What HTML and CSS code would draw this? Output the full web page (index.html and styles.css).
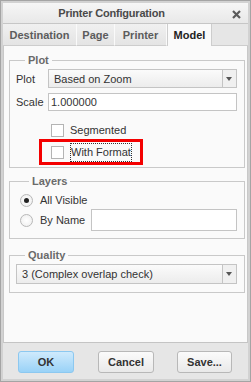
FILE: index.html
```html
<!DOCTYPE html>
<html lang="en">
<head>
    <meta charset="UTF-8">
    <title>Printer Configuration</title>
    <link rel="stylesheet" href="styles.css">
</head>
<body>
    <div class="window">
        <div class="titlebar">
            <span class="title">Printer Configuration</span>
            <svg class="close" width="9" height="9" viewBox="0 0 9 9">
                <path d="M1 1 L8 8 M8 1 L1 8" stroke="#5a5a5a" stroke-width="2.2"/>
            </svg>
        </div>

        <div class="tabs">
            <div class="tab t-dest">Destination</div>
            <div class="tab t-page">Page</div>
            <div class="tab t-printer">Printer</div>
            <div class="tab t-model active">Model</div>
            <div class="tab-fill"></div>
        </div>

        <div class="panel">
            <fieldset class="group plot">
                <legend>Plot</legend>
                <div class="row">
                    <span class="label">Plot</span>
                    <div class="select">
                        <span class="value">Based on Zoom</span>
                        <span class="arrow"></span>
                    </div>
                </div>
                <div class="row">
                    <span class="label">Scale</span>
                    <div class="input scale">1.000000</div>
                </div>
                <div class="check">
                    <span class="box"></span>
                    <span>Segmented</span>
                </div>
                <div class="check marked">
                    <span class="box"></span>
                    <span class="focus">With Format</span>
                </div>
            </fieldset>

            <fieldset class="group layers">
                <legend>Layers</legend>
                <div class="radio-row">
                    <span class="radio checked"></span>
                    <span>All Visible</span>
                </div>
                <div class="radio-row">
                    <span class="radio"></span>
                    <span class="radio-label">By Name</span>
                    <div class="input name"></div>
                </div>
            </fieldset>

            <fieldset class="group quality">
                <legend>Quality</legend>
                <div class="select wide">
                    <span class="value">3 (Complex overlap check)</span>
                    <span class="arrow"></span>
                </div>
            </fieldset>
        </div>

        <div class="buttons">
            <button class="btn primary">OK</button>
            <button class="btn b-cancel">Cancel</button>
            <button class="btn b-save">Save...</button>
        </div>
    </div>
</body>
</html>
```

FILE: styles.css
```css
* {
    margin: 0;
    padding: 0;
    box-sizing: border-box;
}

body {
    font-family: "Liberation Sans", Arial, sans-serif;
    font-size: 11px;
    color: #333;
    background: #fff;
}

.window {
    width: 251px;
    height: 382px;
    border: 1px solid #a4a4a4;
    background: #d2d2d2;
    padding: 2px;
    display: flex;
    flex-direction: column;
}

/* Title bar */
.titlebar {
    height: 21px;
    flex-shrink: 0;
    background: linear-gradient(to bottom, #f6f6f6, #e8e8e8);
    border-bottom: 1px solid #c6c6c6;
    display: flex;
    align-items: center;
    justify-content: center;
    padding-right: 28px;
    position: relative;
}

.title {
    font-weight: bold;
    font-size: 11px;
    letter-spacing: -0.2px;
    color: #4a4a4a;
}

.close {
    position: absolute;
    right: 7px;
    top: 7px;
}

/* Tabs */
.tabs {
    height: 22px;
    flex-shrink: 0;
    display: flex;
    background: #ececec;
}

.tab {
    display: flex;
    align-items: center;
    justify-content: center;
    font-weight: bold;
    color: #5c5c5c;
    background: linear-gradient(to bottom, #f0f0f0, #e4e4e4);
    border-right: 1px solid #fafafa;
    border-bottom: 1px solid #cdcdcd;
}

.t-dest { width: 74px; }
.t-page { width: 38px; }
.t-printer { width: 52px; }
.t-model { width: 45px; }

.tab.active {
    color: #222;
    background: #fafafa;
    border: 1px solid #cdcdcd;
    border-bottom: none;
    margin-top: -1px;
}

.tab-fill {
    flex: 1;
    background: #e6e6e6;
    border-bottom: 1px solid #cdcdcd;
}

/* Main panel */
.panel {
    flex: 1;
    background: #fafafa;
    padding: 7px 2px 0 5px;
    border-left: 1px solid #c8c8c8;
    border-right: 1px solid #c8c8c8;
    border-bottom: 1px solid #c4c4c4;
}

.group {
    border: 1px solid #c9c9c9;
    padding: 2px 7px 2px 6px;
}

.group legend {
    font-weight: bold;
    color: #6a6a6a;
    padding: 0 3px;
    margin-left: 9px;
    line-height: 14px;
}

.row {
    display: flex;
    align-items: center;
}

.row + .row {
    margin-top: 5px;
}

.label {
    width: 32px;
}

.select {
    flex: 1;
    height: 19px;
    display: flex;
    border: 1px solid #c4c4c4;
    background: linear-gradient(to bottom, #fbfbfb, #ececec);
}

.select .value {
    flex: 1;
    padding-left: 5px;
    display: flex;
    align-items: center;
}

.select .arrow {
    width: 14px;
    border-left: 1px solid #c4c4c4;
    background: #f0f0f0;
    position: relative;
}

.select .arrow::after {
    content: '';
    position: absolute;
    left: 3px;
    top: 7px;
    border-left: 3.5px solid transparent;
    border-right: 3.5px solid transparent;
    border-top: 4px solid #555;
}

.input {
    background: #fff;
    border: 1px solid #c4c4c4;
    display: flex;
    align-items: center;
    padding-left: 2px;
}

.input.scale {
    flex: 1;
    height: 18px;
}

.check {
    display: flex;
    align-items: center;
    gap: 6px;
    width: 104px;
    height: 20px;
    margin: 9px 0 0 23px;
    padding-left: 12px;
}

.box {
    width: 13px;
    height: 13px;
    border: 1px solid #b4b4b4;
    background: #fff;
}

.check.marked {
    height: 26px;
    margin-top: -1px;
    border: 3px solid #f40000;
    padding-left: 9px;
}

.focus {
    border: 1px dotted #333;
    padding: 2px 0 3px 0;
}

/* Layers */
.layers {
    margin-top: 6px;
    padding: 2px 7px 7px 10px;
}

.radio-row {
    display: flex;
    align-items: center;
    height: 20px;
    gap: 7px;
}

.radio-row + .radio-row {
    height: 22px;
    margin-top: -1px;
}

.radio {
    width: 13px;
    height: 13px;
    flex-shrink: 0;
    border-radius: 50%;
    border: 1px solid #b8b8b8;
    background: radial-gradient(circle, #fff, #ececec);
    position: relative;
}

.radio.checked::after {
    content: '';
    position: absolute;
    left: 3px;
    top: 3px;
    width: 5px;
    height: 5px;
    border-radius: 50%;
    background: #222;
}

.radio-label {
    width: 44px;
    flex-shrink: 0;
    white-space: nowrap;
}

.input.name {
    flex: 1;
    height: 22px;
}

/* Quality */
.quality {
    margin-top: 9px;
    padding-bottom: 8px;
}

.select.wide {
    height: 20px;
}

/* Buttons */
.buttons {
    height: 36px;
    flex-shrink: 0;
    background: #e6e6e6;
    display: flex;
    align-items: flex-start;
    padding: 8px 0 0 15px;
}

.btn {
    width: 56px;
    height: 22px;
    font-family: inherit;
    font-weight: bold;
    font-size: 11px;
    color: #333;
    border: 1px solid #b8b8b8;
    border-radius: 3px;
    background: linear-gradient(to bottom, #fbfbfb, #e9e9e9);
}

.btn.primary {
    border-color: #8cc8f0;
    background: linear-gradient(to bottom, #cfeafc, #99d2f7);
}

.b-cancel { margin-left: 24px; }
.b-save { margin-left: 23px; width: 55px; }
```
